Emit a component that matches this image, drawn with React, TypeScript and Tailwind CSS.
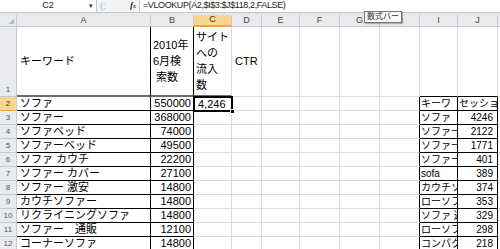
import React from 'react';

const cols = ['A', 'B', 'C', 'D', 'E', 'F', 'G', 'H', 'I', 'J'];

const leftRows: [string, string][] = [
  ['ソファ', '550000'],
  ['ソファー', '368000'],
  ['ソファベッド', '74000'],
  ['ソファーベッド', '49500'],
  ['ソファ カウチ', '22200'],
  ['ソファー カバー', '27100'],
  ['ソファー 激安', '14800'],
  ['カウチソファー', '14800'],
  ['リクライニングソファ', '14800'],
  ['ソファー　通販', '12100'],
  ['コーナーソファ', '14800'],
];

// only the part that fits in column I is visible
const rightRows: [string, string][] = [
  ['キーワ', 'セッショ'],
  ['ソファ', '4246'],
  ['ソファー', '2122'],
  ['ソファー', '1771'],
  ['ソファー', '401'],
  ['sofa', '389'],
  ['カウチソ', '374'],
  ['ローソフ', '353'],
  ['ソファ 通', '329'],
  ['ローソフ', '298'],
  ['コンパク', '218'],
];

const grid = 'border-r border-b border-[#dadcdf]';
const hdr = 'bg-[#e9ebee] border-r border-b border-[#c5cad1]';
const ink = 'border-r border-b border-black';

function FormulaBar() {
  return (
    <div className="flex h-[13px] bg-white border-b border-[#c3c8cf] text-[#222]">
      <div className="relative flex w-[97px] items-center justify-center border-r border-[#c3c8cf] text-[9px]">
        C2
        <span className="absolute right-[3px] top-[1px] text-[7px] text-[#333]">▾</span>
      </div>
      <div className="flex w-[30px] items-center bg-[#f3f4f6] pl-[3px] text-[9px] text-[#aab]">
        <span className="leading-none">(:</span>
      </div>
      <div className="flex w-[12px] items-center justify-center bg-[#f3f4f6] font-['Liberation_Serif',serif] text-[9px] font-bold italic text-[#333]">
        f<span className="text-[6px]">x</span>
      </div>
      <div className="flex flex-1 items-center border-l border-[#c3c8cf] pl-[3px] text-[9px] tracking-[-0.4px]">
        =VLOOKUP(A2,$I$3:$J$118,2,FALSE)
      </div>
    </div>
  );
}

export default function App() {
  return (
    <div className="relative h-[249px] w-[500px] overflow-hidden bg-white font-['Liberation_Sans','Noto_Sans_CJK_JP',sans-serif] text-black">
      <FormulaBar />
      <div className="h-[2px] bg-[#e4e7eb]" />
      <div className="grid grid-cols-[17px_134px_43px_38px_30px_38px_40px_40px_40px_38px_40px_40px] grid-rows-[12px_70px_repeat(11,14px)]">
        {/* column headers */}
        <div className={`${hdr} relative`}>
          <div className="absolute bottom-[2px] right-[2px] h-[5px] w-[5px] bg-[linear-gradient(135deg,transparent_50%,#b9bfc7_50%)]" />
        </div>
        {cols.map((c) => (
          <div
            key={c}
            className={
              c === 'C'
                ? 'flex items-center justify-center border-r border-b-2 border-r-[#c5cad1] border-b-[#f0a540] bg-[#f9d58e] text-[9px] text-[#333]'
                : `${hdr} flex items-center justify-center text-[9px] text-[#3c4350]`
            }
          >
            {c}
          </div>
        ))}
        <div className={hdr} />

        {/* row 1 */}
        <div className={`${hdr} flex items-end justify-center text-[8px] text-[#4a5872]`}>1</div>
        <div className="flex items-center border-r border-b-2 border-r-black border-b-[#6b6b6b] pl-[3px] text-[11px]">キーワード</div>
        <div className="flex items-center border-r border-b-2 border-r-black border-b-[#6b6b6b] pl-[2px] text-[11px] leading-[16px]">
          <span>
            2010年
            <br />
            6月検
            <br />
            &nbsp;索数
          </span>
        </div>
        <div className="flex items-center border-r border-b-2 border-r-[#dadcdf] border-b-[#6b6b6b] pl-[2px] text-[11px] leading-[16px]">
          <span>
            サイト
            <br />
            への
            <br />
            流入
            <br />
            数
          </span>
        </div>
        <div className={`${grid} flex items-center pl-[3px] text-[11px]`}>CTR</div>
        <div className={grid} />
        <div className={grid} />
        <div className={grid} />
        <div className={grid} />
        <div className="border-r border-b border-r-[#dadcdf] border-b-black" />
        <div className="border-r border-b border-r-[#dadcdf] border-b-black" />
        <div className={grid} />

        {/* rows 2-12 */}
        {leftRows.map(([kw, vol], i) => {
          const n = i + 2;
          const [rk, rv] = rightRows[i];
          return (
            <React.Fragment key={n}>
              <div
                className={
                  n === 2
                    ? 'flex items-end justify-center border-r border-b border-r-[#c5cad1] border-b-[#f0a540] bg-[#f9d58e] text-[8px] text-[#333]'
                    : `${hdr} flex items-end justify-center text-[8px] text-[#4a5872]`
                }
              >
                {n}
              </div>
              <div className={`${ink} flex items-end overflow-hidden whitespace-nowrap pl-[3px] text-[11px] leading-[13px]`}>{kw}</div>
              <div className={`${ink} flex items-end justify-end pr-[2px] text-[11px] leading-[13px]`}>{vol}</div>
              {n === 2 ? (
                <div className="relative flex items-end pl-[4px] text-[11px] leading-[13px]">
                  4,246
                  <div className="absolute inset-[-1px] border-2 border-black" />
                  <div className="absolute bottom-[-3px] right-[-3px] h-[5px] w-[5px] border border-white bg-black" />
                </div>
              ) : (
                <div className={grid} />
              )}
              <div className={grid} />
              <div className={grid} />
              <div className={grid} />
              <div className={grid} />
              <div className="border-r border-b border-r-black border-b-[#dadcdf]" />
              <div className={`${ink} flex items-end overflow-hidden whitespace-nowrap pl-[1px] text-[10px] leading-[12px]`}>{rk}</div>
              <div
                className={`${ink} flex items-end overflow-hidden whitespace-nowrap text-[10px] leading-[12px] ${
                  n === 2 ? 'pl-[1px]' : 'justify-end pr-[4px]'
                }`}
              >
                {rv}
              </div>
              <div className={grid} />
            </React.Fragment>
          );
        })}
      </div>

      {/* tooltip over the formula bar */}
      <div className="absolute left-[364px] top-[11px] border border-[#767676] bg-[#f7f7f7] px-[2px] text-[8px] leading-[10px] text-[#333] shadow-[1px_1px_1px_rgba(0,0,0,0.25)]">
        数式バー
      </div>
    </div>
  );
}
